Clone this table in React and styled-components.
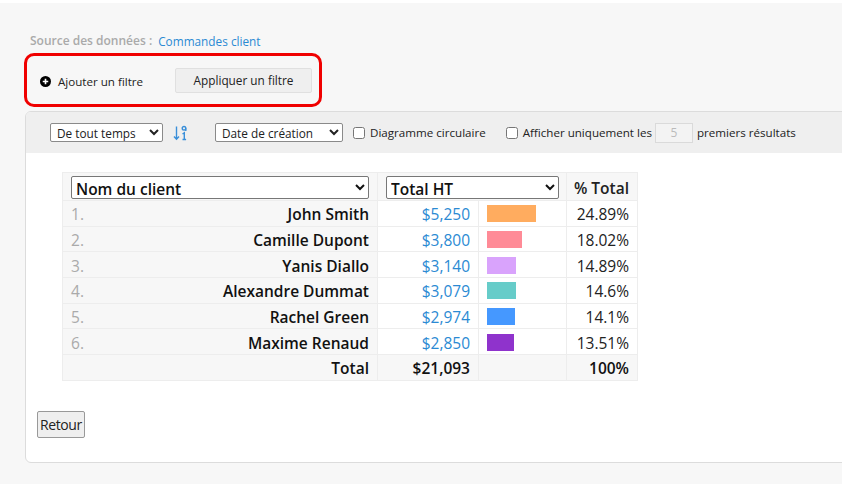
import React from 'react';
import styled, { createGlobalStyle } from 'styled-components';

const GlobalStyle = createGlobalStyle`
  html, body {
    margin: 0;
    padding: 0;
    background: #ffffff;
    font-family: "Open Sans", "Liberation Sans", sans-serif;
    color: #222;
  }
`;

const rows = [
  { name: 'John Smith', value: 5250, pct: '24.89%', color: '#ffac5f' },
  { name: 'Camille Dupont', value: 3800, pct: '18.02%', color: '#ff8b97' },
  { name: 'Yanis Diallo', value: 3140, pct: '14.89%', color: '#d9a3fc' },
  { name: 'Alexandre Dummat', value: 3079, pct: '14.6%', color: '#66ccc9' },
  { name: 'Rachel Green', value: 2974, pct: '14.1%', color: '#4598ff' },
  { name: 'Maxime Renaud', value: 2850, pct: '13.51%', color: '#8f33cc' },
];

const maxValue = 5250;
const money = (v) => '$' + v.toLocaleString('en-US');

const PlusIcon = () => (
  <svg width="11" height="11" viewBox="0 0 12 12">
    <circle cx="6" cy="6" r="6" fill="#000" />
    <path d="M6 3v6M3 6h6" stroke="#fff" strokeWidth="1.8" />
  </svg>
);

const SortIcon = () => (
  <svg width="15" height="16" viewBox="0 0 15 16" fill="none" stroke="#3a8fd9" strokeWidth="1.4">
    <path d="M3.5 1.5v12.5M1 11.5l2.5 2.8 2.5-2.8" />
    <circle cx="11" cy="3.3" r="1.8" />
    <path d="M12.8 3.3v2.6" />
    <path d="M9.5 9l1.8-1.2v6.7M9.5 14.5h3.6" />
  </svg>
);

const App = () => {
  return (
    <Page>
      <GlobalStyle />
      <Source>
        <SourceLabel>Source des données :</SourceLabel>
        <SourceLink>Commandes client</SourceLink>
      </Source>
      <FilterBox>
        <AddFilter>
          <PlusIcon />
          Ajouter un filtre
        </AddFilter>
        <GreyButton>Appliquer un filtre</GreyButton>
      </FilterBox>
      <Panel>
        <Toolbar>
          <SmallSelect $width={113} defaultValue="all">
            <option value="all">De tout temps</option>
          </SmallSelect>
          <SortButton><SortIcon /></SortButton>
          <SmallSelect $width={128} defaultValue="created">
            <option value="created">Date de création</option>
          </SmallSelect>
          <CheckLabel $gap={10}>
            <Check type="checkbox" />
            Diagramme circulaire
          </CheckLabel>
          <CheckLabel $gap={0}>
            <Check type="checkbox" />
            Afficher uniquement les
          </CheckLabel>
          <CountInput value="5" readOnly />
          <span>premiers résultats</span>
        </Toolbar>
        <Body>
          <Table>
            <colgroup>
              <col style={{ width: 315 }} />
              <col style={{ width: 101 }} />
              <col style={{ width: 88 }} />
              <col style={{ width: 71 }} />
            </colgroup>
            <thead>
              <tr>
                <HeadCell>
                  <HeadSelect defaultValue="client">
                    <option value="client">Nom du client</option>
                  </HeadSelect>
                </HeadCell>
                <HeadCell colSpan={2}>
                  <HeadSelect $width={173} defaultValue="ht">
                    <option value="ht">Total HT</option>
                  </HeadSelect>
                </HeadCell>
                <HeadCell $right>% Total</HeadCell>
              </tr>
            </thead>
            <tbody>
              {rows.map((r, i) => (
                <tr key={r.name}>
                  <NameCell>
                    <Rank>{i + 1}.</Rank>
                    <Name>{r.name}</Name>
                  </NameCell>
                  <ValueCell>{money(r.value)}</ValueCell>
                  <BarCell>
                    <Bar $color={r.color} style={{ width: Math.round((r.value / maxValue) * 49) }} />
                  </BarCell>
                  <PctCell>{r.pct}</PctCell>
                </tr>
              ))}
              <tr>
                <TotalCell>Total</TotalCell>
                <TotalCell>$21,093</TotalCell>
                <TotalCell />
                <TotalCell>100%</TotalCell>
              </tr>
            </tbody>
          </Table>
          <BackButton>Retour</BackButton>
        </Body>
      </Panel>
    </Page>
  );
};

export default App;

const Page = styled.div`
  margin-top: 3px;
  height: 481px;
  background: #f7f7f7;
  padding: 31px 0 0 24px;
  box-sizing: border-box;
  overflow: hidden;
  font-size: 11.6px;
`;

const Source = styled.div`
  display: flex;
  gap: 6px;
  margin-left: 6px;
  line-height: 14px;
  font-size: 12px;
`;

const SourceLabel = styled.span`
  color: #aaa;
  font-weight: 600;
`;

const SourceLink = styled.span`
  color: #2b8ad3;
  font-size: 11.8px;
`;

const FilterBox = styled.div`
  margin-top: 5px;
  width: 298px;
  height: 54px;
  box-sizing: border-box;
  border: 3px solid #f00000;
  border-radius: 10px;
  display: flex;
  align-items: center;
  justify-content: space-between;
  padding: 0 7px 0 13px;
`;

const AddFilter = styled.div`
  display: flex;
  align-items: center;
  gap: 7px;
  color: #222;
  padding-top: 2px;
`;

const GreyButton = styled.button`
  width: 137px;
  height: 25px;
  background: #efefef;
  border: 1px solid #e0e0e0;
  border-radius: 2px;
  font-family: inherit;
  font-size: 11.8px;
  color: #222;
  padding: 0;
`;

const Panel = styled.div`
  margin-top: 4px;
  margin-left: 1px;
  margin-right: -20px;
  height: 352px;
  box-sizing: border-box;
  border: 1px solid #dcdcdc;
  border-radius: 6px 0 0 6px;
  background: #fff;
  overflow: hidden;
  display: flex;
  flex-direction: column;
`;

const Toolbar = styled.div`
  height: 41px;
  background: #efefef;
  display: flex;
  align-items: center;
  padding-left: 24px;
  color: #222;
  white-space: nowrap;
  flex-shrink: 0;
`;

const SmallSelect = styled.select`
  width: ${(p) => p.$width}px;
  height: 19px;
  font-family: inherit;
  font-size: 11.8px;
  color: #222;
  background: #fff;
  border: 1px solid #8a8a8a;
  border-radius: 2px;
  padding: 0 0 0 2px;
`;

const SortButton = styled.span`
  display: inline-flex;
  width: 52px;
  padding-left: 10px;
  box-sizing: border-box;
`;

const CheckLabel = styled.label`
  display: inline-flex;
  align-items: center;
  gap: 5px;
  margin-left: 10px;
  margin-right: ${(p) => p.$gap}px;
`;

const Check = styled.input`
  width: 12px;
  height: 12px;
  margin: 0;
`;

const CountInput = styled.input`
  width: 38px;
  height: 20px;
  box-sizing: border-box;
  margin: 0 4px 0 3px;
  border: 1px solid #dadada;
  background: #f3f3f3;
  color: #bbb;
  text-align: center;
  font-family: inherit;
  font-size: 12px;
`;

const Body = styled.div`
  padding: 19px 0 0 11px;
`;

const Table = styled.table`
  margin-left: 25px;
  width: 575px;
  border-collapse: collapse;
  table-layout: fixed;
  font-size: 15.5px;
  white-space: nowrap;

  td, th {
    border: 1px solid #ededed;
  }
`;

const HeadCell = styled.th`
  height: 28px;
  box-sizing: border-box;
  background: #f7f7f7;
  padding: ${(p) => (p.$right ? '3px 8px 1px 0' : '3px 8px 1px')};
  text-align: ${(p) => (p.$right ? 'right' : 'left')};
  font-weight: 600;
  color: #222;
`;

const HeadSelect = styled.select`
  display: block;
  width: ${(p) => (p.$width ? `${p.$width}px` : '100%')};
  height: 23px;
  font-family: inherit;
  font-size: 15.5px;
  font-weight: 600;
  color: #111;
  background: #fff;
  border: 1px solid #777;
  border-radius: 2px;
  padding: 0;
`;

const NameCell = styled.td`
  height: 25.7px;
  box-sizing: border-box;
  background: #f7f7f7;
  padding: 2px 8px 0;
`;

const Rank = styled.span`
  float: left;
  color: #aaa;
`;

const Name = styled.span`
  float: right;
  font-weight: 600;
  color: #111;
`;

const ValueCell = styled.td`
  text-align: right;
  padding: 2px 8px 0;
  color: #2b8ad3;
`;

const BarCell = styled.td`
  padding: 1px 8px 0;
`;

const Bar = styled.div`
  height: 17px;
  background: ${(p) => p.$color};
`;

const PctCell = styled.td`
  text-align: right;
  padding: 2px 8px 0;
  color: #222;
`;

const TotalCell = styled.td`
  height: 25.7px;
  box-sizing: border-box;
  background: #f7f7f7;
  text-align: right;
  padding: 2px 8px 0;
  font-weight: 600;
  color: #111;
`;

const BackButton = styled.button`
  margin-top: 30px;
  height: 27px;
  padding: 0 2px;
  background: #efefef;
  border: 1px solid #999;
  border-radius: 2px;
  font-family: inherit;
  font-size: 14px;
  letter-spacing: -0.4px;
  color: #222;
`;
